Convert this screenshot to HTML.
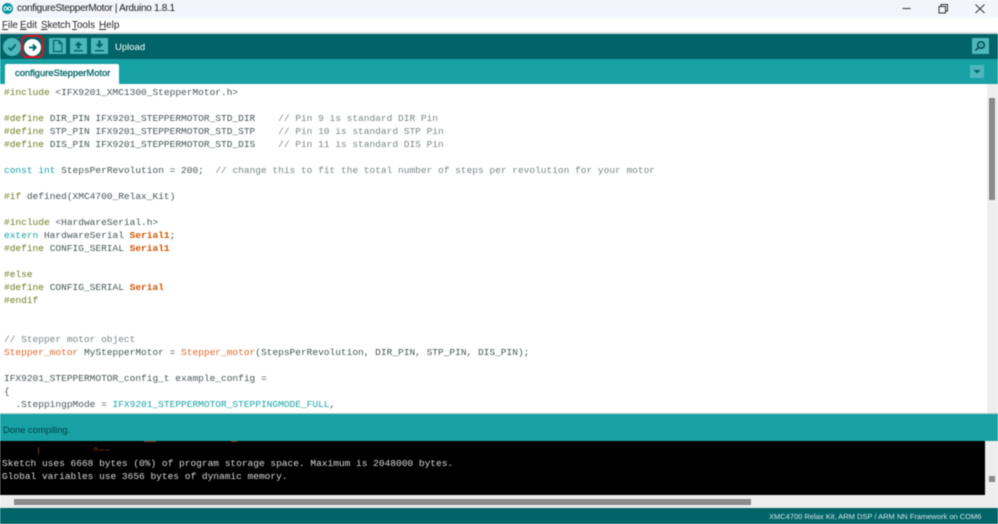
<!DOCTYPE html>
<html>
<head>
<meta charset="utf-8">
<style>
html,body{margin:0;padding:0;width:998px;height:524px;overflow:hidden;background:#fff}
body{position:relative;font-family:"Liberation Sans",sans-serif;filter:blur(.4px)}
.a{position:absolute}
#code div,#con div{position:absolute;left:4px;white-space:pre;font-family:"Liberation Mono",monospace;font-size:9.53px;line-height:13px;height:13px}
#code div{color:#4a5658}
.c{color:#7c8688}.t{color:#1aa3a8}.o{color:#e0682a}.b{color:#d35400;font-weight:bold}.g{color:#6e7c20}
.btn{position:absolute;top:38px;width:17px;height:16px;background:#4db7bb}
.m{position:absolute;top:19px;font-size:9.9px;line-height:14px;color:#222;white-space:pre}
.m u{text-decoration-thickness:1px;text-underline-offset:1px}
</style>
</head>
<body>
<!-- title bar -->
<div class="a" style="left:0;top:0;width:998px;height:18px;background:#f2f5fb"></div>
<div class="a" style="left:2px;top:3px;width:11px;height:11px;border-radius:50%;background:#00979c"></div>
<svg class="a" style="left:2px;top:3px" width="11" height="11" viewBox="0 0 11 11" fill="none" stroke="#fff" stroke-width="1"><circle cx="3.500" cy="5.500" r="1.600"/><circle cx="7.500" cy="5.500" r="1.600"/></svg>
<div class="a" style="left:17px;top:2px;font-size:10px;letter-spacing:-.3px;line-height:14px;color:#1a1a1a;white-space:pre">configureStepperMotor | Arduino 1.8.1</div>
<svg class="a" style="left:898px;top:0" width="100" height="18" viewBox="0 0 100 18" fill="none" stroke="#333" stroke-width="1"><path d="M4.500 8.500H12.500"/><path d="M41 6.500H47.500V13H41Z"/><path d="M43 6.500V4.500H49.500V11H47.500"/><path d="M77.500 4.500L86.500 13M86.500 4.500L77.500 13"/></svg>
<div class="m" style="left:2px"><u>F</u>ile</div>
<div class="m" style="left:20px"><u>E</u>dit</div>
<div class="m" style="left:41px;letter-spacing:-.15px"><u>S</u>ketch</div>
<div class="m" style="left:72px"><u>T</u>ools</div>
<div class="m" style="left:99px"><u>H</u>elp</div>
<div class="a" style="left:0;top:32px;width:998px;height:2px;background:#d8dcde"></div>

<!-- toolbar -->
<div class="a" style="left:0;top:34px;width:998px;height:25px;background:#006468"></div>
<div class="a" style="left:3px;top:38px;width:18px;height:18px;border-radius:50%;background:#4db7bb"></div>
<svg class="a" style="left:3px;top:38px" width="18" height="18" viewBox="0 0 18 18" fill="none" stroke="#006468" stroke-width="1.800"><path d="M5.500 9.500L8 12L12.800 6.500"/></svg>
<div class="a" style="left:21px;top:35px;width:19px;height:19px;border:2px solid #e0101e;border-radius:6px"></div>
<div class="a" style="left:24px;top:38.500px;width:17px;height:17px;border-radius:50%;background:#fff"></div>
<svg class="a" style="left:24px;top:38.500px" width="17" height="17" viewBox="0 0 17 17" fill="none" stroke="#006468" stroke-width="1.800"><path d="M5 8.500H11.500M8.800 5.500L11.800 8.500L8.800 11.500"/></svg>
<div class="btn" style="left:49px"></div>
<svg class="a" style="left:49px;top:38px" width="17" height="16" viewBox="0 0 17 16" fill="none" stroke="#006468" stroke-width="1.200"><path d="M4.500 2.500H10L13 5.500V13.500H4.500Z"/><path d="M10 2.500V5.500H13"/></svg>
<div class="btn" style="left:70px"></div>
<svg class="a" style="left:70px;top:38px" width="17" height="16" viewBox="0 0 17 16" fill="#006468"><path d="M8.500 3.500L12.500 7.500H9.700V10.500H7.300V7.500H4.500Z"/><rect x="4" y="12" width="9" height="1.400"/></svg>
<div class="btn" style="left:91px"></div>
<svg class="a" style="left:91px;top:38px" width="17" height="16" viewBox="0 0 17 16" fill="#006468"><path d="M7.300 2.500H9.700V6H12.500L8.500 10L4.500 6H7.300Z"/><rect x="4" y="12" width="9" height="1.400"/></svg>
<div class="a" style="left:115px;top:41px;font-size:9.500px;line-height:14px;color:#fff">Upload</div>
<div class="a" style="left:972px;top:38px;width:17px;height:16px;background:#4db7bb"></div>
<svg class="a" style="left:972px;top:38px" width="17" height="16" viewBox="0 0 17 16" fill="none" stroke="#00494d" stroke-width="1.500"><circle cx="9" cy="7" r="3.300"/><path d="M6.500 9.500L3.500 12.500"/><circle cx="9" cy="7" r="0.600" fill="#00494d" stroke="none"/></svg>

<!-- tabs -->
<div class="a" style="left:0;top:59px;width:998px;height:25px;background:#17a1a5"></div>
<div class="a" style="left:5px;top:64px;width:114px;height:20px;background:#fff;border-radius:2px 2px 0 0"></div>
<div class="a" style="left:15px;top:66px;font-size:9.400px;line-height:14px;color:#006468;-webkit-text-stroke:.3px #006468;white-space:pre">configureStepperMotor</div>
<div class="a" style="left:970px;top:65px;width:14px;height:13px;background:#4db7bb"></div>
<svg class="a" style="left:970px;top:65px" width="14" height="13" viewBox="0 0 14 13" fill="#006468"><path d="M3.500 5H10.500L7 8.500Z"/></svg>

<!-- editor -->
<div id="code">
<div style="top:86px"><span class="g">#include</span> &lt;IFX9201_XMC1300_StepperMotor.h&gt;</div>
<div style="top:112px"><span class="g">#define</span> DIR_PIN IFX9201_STEPPERMOTOR_STD_DIR    <span class="c">// Pin 9 is standard DIR Pin</span></div>
<div style="top:125px"><span class="g">#define</span> STP_PIN IFX9201_STEPPERMOTOR_STD_STP    <span class="c">// Pin 10 is standard STP Pin</span></div>
<div style="top:138px"><span class="g">#define</span> DIS_PIN IFX9201_STEPPERMOTOR_STD_DIS    <span class="c">// Pin 11 is standard DIS Pin</span></div>
<div style="top:164px"><span class="t">const</span> <span class="t">int</span> StepsPerRevolution = 200;  <span class="c">// change this to fit the total number of steps per revolution for your motor</span></div>
<div style="top:190px"><span class="g">#if</span> defined(XMC4700_Relax_Kit)</div>
<div style="top:216px"><span class="g">#include</span> &lt;HardwareSerial.h&gt;</div>
<div style="top:229px"><span class="t">extern</span> HardwareSerial <span class="b">Serial1</span>;</div>
<div style="top:242px"><span class="g">#define</span> CONFIG_SERIAL <span class="b">Serial1</span></div>
<div style="top:268px"><span class="g">#else</span></div>
<div style="top:281px"><span class="g">#define</span> CONFIG_SERIAL <span class="b">Serial</span></div>
<div style="top:294px"><span class="g">#endif</span></div>
<div style="top:333px"><span class="c">// Stepper motor object</span></div>
<div style="top:346px"><span class="o">Stepper_motor</span> MyStepperMotor = <span class="o">Stepper_motor</span>(StepsPerRevolution, DIR_PIN, STP_PIN, DIS_PIN);</div>
<div style="top:372px">IFX9201_STEPPERMOTOR_config_t example_config =</div>
<div style="top:385px">{</div>
<div style="top:398px">  .SteppingpMode = <span class="t">IFX9201_STEPPERMOTOR_STEPPINGMODE_FULL</span>,</div>
</div>
<div class="a" style="left:987px;top:84px;width:11px;height:330px;background:#eeeeee"></div>
<div class="a" style="left:989px;top:98px;width:6px;height:102px;background:#8a8a8a"></div>

<!-- status -->
<div class="a" style="left:0;top:413px;width:998px;height:1px;background:#bcd0d0"></div>
<div class="a" style="left:0;top:414px;width:998px;height:27px;background:#17a1a5"></div>
<div class="a" style="left:3px;top:423px;font-size:9.400px;line-height:13px;color:#063f42;white-space:pre">Done compiling.</div>

<!-- console -->
<div class="a" style="left:0;top:441px;width:985px;height:54px;background:#000"></div>
<div class="a" style="left:144px;top:441px;width:12px;height:1px;background:#8a3210"></div>
<div class="a" style="left:231px;top:441px;width:6px;height:1px;background:#8a3210"></div>
<div class="a" style="left:38px;top:447px;width:1px;height:7px;background:#8a3210"></div>
<div id="con">
<div style="left:93px;top:444px;color:#a33a10">^~~</div>
<div style="left:2px;top:457px;color:#d8d8d8">Sketch uses 6668 bytes (0%) of program storage space. Maximum is 2048000 bytes.</div>
<div style="left:2px;top:470px;color:#d8d8d8">Global variables use 3656 bytes of dynamic memory.</div>
</div>
<div class="a" style="left:985px;top:441px;width:13px;height:67px;background:#eeeeee"></div>
<div class="a" style="left:989px;top:476px;width:6px;height:6px;background:#8a8a8a"></div>
<div class="a" style="left:0;top:495px;width:998px;height:13px;background:#eeeeee"></div>
<div class="a" style="left:14px;top:499px;width:737px;height:6px;background:#8a8a8a"></div>

<!-- footer -->
<div class="a" style="left:0;top:508px;width:998px;height:16px;background:#006468"></div>
<div class="a" style="left:769px;top:511px;font-size:7.500px;line-height:12px;color:#d9e8e8;white-space:pre">XMC4700 Relax Kit, ARM DSP / ARM NN Framework on COM6</div>
</body>
</html>
